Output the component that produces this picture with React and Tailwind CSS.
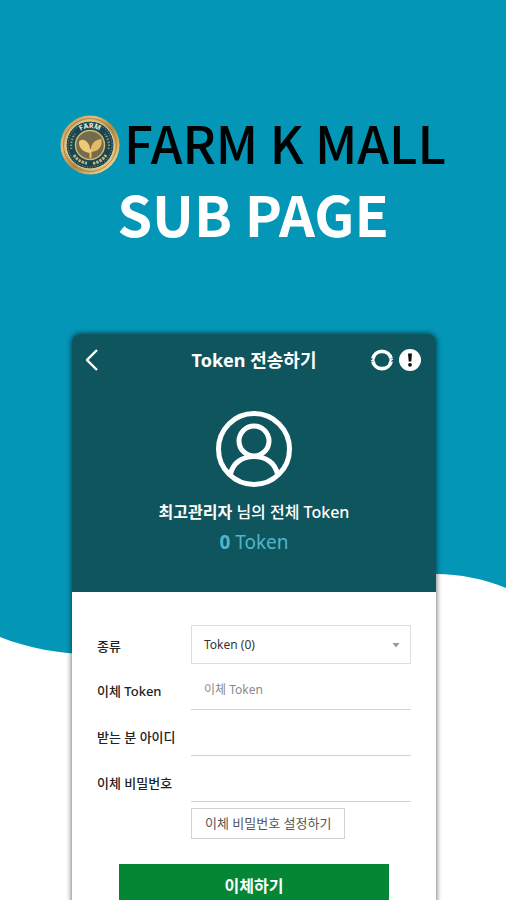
const fieldLine =
  "h-10 w-full border-b border-[#d2d2d2] bg-transparent px-[13px] text-xs text-[#555] outline-none placeholder:text-[#8a8a8a]";

function Backdrop() {
  return (
    <svg
      className="absolute inset-0 -z-10 h-full w-full"
      viewBox="0 0 506 900"
      preserveAspectRatio="none"
      aria-hidden="true"
    >
      <path
        d="M0 0H506V588C484 579 460 574 436 574C330 572 190 655 90 654C60 654 28 648 0 637Z"
        fill="#0396b7"
      />
    </svg>
  );
}

function Coin() {
  return (
    <svg className="h-[60px] w-[60px] shrink-0" viewBox="0 0 60 60" aria-hidden="true">
      <defs>
        <linearGradient id="gold" x1="0" y1="0" x2="1" y2="1">
          <stop offset="0" stopColor="#b98b45" />
          <stop offset="0.3" stopColor="#e3bd76" />
          <stop offset="0.55" stopColor="#b58a42" />
          <stop offset="0.85" stopColor="#efcf86" />
          <stop offset="1" stopColor="#b0803a" />
        </linearGradient>
        <path id="ring" d="M13 30A17 17 0 0 1 47 30" />
      </defs>
      <circle cx="30" cy="30" r="29.5" fill="url(#gold)" />
      <circle cx="30" cy="30" r="26.5" fill="none" stroke="#9b7437" strokeWidth="0.7" />
      <circle cx="30" cy="30" r="24" fill="#174651" stroke="#ead7a4" strokeWidth="1" />
      <circle cx="30" cy="30" r="22" fill="none" stroke="#c5ad72" strokeWidth="0.8" strokeDasharray="1 1.6" />
      <path d="M14 40A18.500 18.500 0 0 0 27 48.300M33 48.300A18.500 18.500 0 0 0 46 40" fill="none" stroke="#c8b57c" strokeWidth="3" strokeDasharray="2.400 1" />
      <path d="M11.5 34A19 19 0 0 1 15 19M48.5 34A19 19 0 0 0 45 19" fill="none" stroke="#a99c70" strokeWidth="2" strokeDasharray="1.5 1.5" />
      <text fill="#f4efda" fontSize="7" fontWeight="700" fontFamily="Noto Sans, sans-serif" textAnchor="middle">
        <textPath href="#ring" startOffset="50%">FARM</textPath>
      </text>
      <circle cx="30" cy="30" r="14.5" fill="#746d4b" stroke="#d3b673" strokeWidth="1.5" />
      <path d="M30 38C23 37 18.500 33 19 26.500C21 24 24 24 27 27C29.500 29.500 30.500 33 30 38Z" fill="#efc878" />
      <path d="M31 37C30 30 34 24.500 41.500 24C42.500 31 39 36.500 31 37Z" fill="#e5b965" />
      <path d="M30.500 34V43" stroke="#efc878" strokeWidth="1.8" />
    </svg>
  );
}

function Avatar() {
  return (
    <svg className="h-[78px] w-[78px]" viewBox="0 0 78 78" fill="none" stroke="#fff" strokeWidth="5" aria-hidden="true">
      <circle cx="39" cy="39" r="35.500" />
      <circle cx="39" cy="31" r="15" />
      <path d="M15.500 64C18 53 27 46.500 39 46.500C51 46.500 60 53 62.500 64" />
    </svg>
  );
}

function CardHeader() {
  return (
    <header className="flex h-[258px] flex-col items-center rounded-t-lg bg-[#0e555d]">
      <div className="grid w-full grid-cols-[1fr_auto_1fr] items-center px-3.5 pt-3">
        <button type="button" aria-label="뒤로" className="justify-self-start">
          <svg className="h-7 w-4" viewBox="0 0 16 28" fill="none" stroke="#fff" strokeWidth="2.400" aria-hidden="true">
            <path d="M11 4L1 14L11 24" />
          </svg>
        </button>
        <h2 className="text-lg leading-7 font-bold text-white">Token 전송하기</h2>
        <div className="flex gap-1 justify-self-end">
          <button type="button" aria-label="새로고침">
            <svg className="h-6 w-6" viewBox="0 0 24 24" fill="none" aria-hidden="true">
              <path d="M2.900 10.700A9.300 9.300 0 0 1 21.100 10.700M21.100 13.300A9.300 9.300 0 0 1 2.900 13.300" stroke="#fff" strokeWidth="3.800" />
              <path d="M0.500 13L4.500 9.500V13ZM23.500 11L19.500 14.500V11Z" fill="#fff" />
            </svg>
          </button>
          <button type="button" aria-label="안내">
            <svg className="h-6 w-6" viewBox="0 0 24 24" aria-hidden="true">
              <circle cx="12" cy="12" r="11" fill="#fff" />
              <path d="M10 5.500H14L13.300 13.500H10.700Z" fill="#111" />
              <circle cx="12" cy="16.800" r="1.900" fill="#111" />
            </svg>
          </button>
        </div>
      </div>
      <div className="mt-9">
        <Avatar />
      </div>
      <p className="mt-3 text-base leading-6 font-medium text-white">
        <strong className="font-bold">최고관리자</strong> 님의 전체 Token
      </p>
      <p className="mt-0.5 text-[19px] leading-8 text-[#50b6cc]">
        <strong className="font-bold">0</strong> Token
      </p>
    </header>
  );
}

function Row({ id, label, children }) {
  return (
    <div className="grid grid-cols-[94px_1fr] items-center">
      <label htmlFor={id} className="pt-1 text-[13px] font-medium whitespace-nowrap text-[#222]">
        {label}
      </label>
      {children}
    </div>
  );
}

function TransferForm() {
  return (
    <form className="flex flex-col gap-1.5 bg-white px-[25px] pt-[33px] pb-10" onSubmit={(e) => e.preventDefault()}>
      <Row id="kind" label="종류">
        <div className="relative">
          <select
            id="kind"
            className="block h-[39px] w-full appearance-none border border-[#dedede] bg-white px-3 text-xs text-[#333] outline-none"
          >
            <option>Token (0)</option>
          </select>
          <svg className="pointer-events-none absolute top-4 right-[11px] h-2 w-2" viewBox="0 0 8 8" aria-hidden="true">
            <path d="M0.500 2H7.500L4 6.500Z" fill="#999" />
          </svg>
        </div>
      </Row>
      <Row id="amount" label="이체 Token">
        <input id="amount" type="text" placeholder="이체 Token" className={fieldLine} />
      </Row>
      <Row id="receiver" label="받는 분 아이디">
        <input id="receiver" type="text" className={fieldLine} />
      </Row>
      <Row id="secret" label="이체 비밀번호">
        <input id="secret" type="password" className={fieldLine} />
      </Row>
      <button
        type="button"
        className="ml-[94px] h-[31px] self-start border border-[#d2d2d2] px-[13px] text-[13px] whitespace-nowrap text-[#555]"
      >
        이체 비밀번호 설정하기
      </button>
      <button type="submit" className="mx-[22px] mt-[19px] h-11 bg-[#048635] text-base font-bold text-white">
        이체하기
      </button>
    </form>
  );
}

export default function App() {
  return (
    <main className="relative isolate h-screen overflow-hidden bg-white font-['Noto_Sans','Noto_Sans_CJK_KR',sans-serif]">
      <Backdrop />
      <h1 className="flex flex-col items-center pt-[109px] font-['Noto_Sans_CJK_KR',sans-serif]">
        <span className="flex items-end gap-1 text-[51px] leading-[66px] font-medium whitespace-nowrap text-black">
          <Coin />
          FARM K MALL
        </span>
        <span className="text-[56px] leading-[76px] font-bold whitespace-nowrap text-white">
          SUB PAGE
        </span>
      </h1>
      <section className="mt-[83px] mr-[70px] ml-[72px] rounded-t-lg shadow-[0_0_5px_1px_rgba(0,0,0,0.5)]">
        <CardHeader />
        <TransferForm />
      </section>
    </main>
  );
}
